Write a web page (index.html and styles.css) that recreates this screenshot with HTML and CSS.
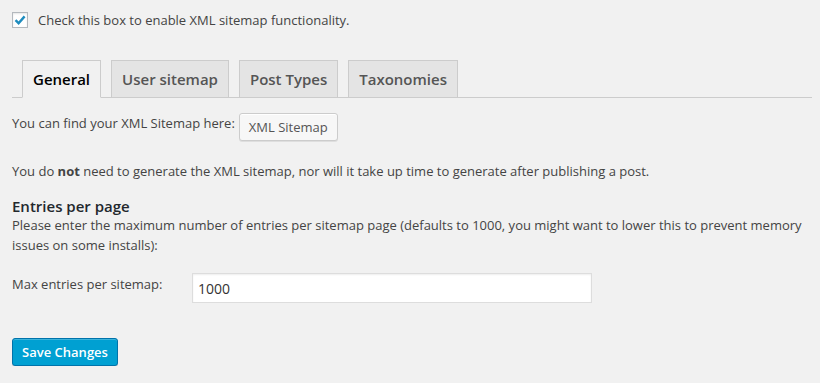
FILE: index.html
```html
<!DOCTYPE html>
<html lang="en">
<head>
    <meta charset="UTF-8">
    <title>XML Sitemaps</title>
    <link rel="stylesheet" href="styles.css">
</head>
<body>
    <div class="wrap">
        <label class="enable">
            <span class="checkbox">
                <svg width="16" height="16" viewBox="0 0 16 16"><path d="M3.5 8.2 L6.6 11.2 L12.6 4.4" fill="none" stroke="#1e8cbe" stroke-width="2.4"/></svg>
            </span>
            Check this box to enable XML sitemap functionality.
        </label>

        <div class="tabs">
            <span class="tab active">General</span>
            <span class="tab">User sitemap</span>
            <span class="tab">Post Types</span>
            <span class="tab">Taxonomies</span>
        </div>

        <div class="find">
            <span class="find-text">You can find your XML Sitemap here:</span>
            <button class="button">XML Sitemap</button>
        </div>

        <p class="note">You do <b>not</b> need to generate the XML sitemap, nor will it take up time to generate after publishing a post.</p>

        <h3 class="section-title">Entries per page</h3>
        <p class="desc">Please enter the maximum number of entries per sitemap page (defaults to 1000, you might want to lower this to prevent memory issues on some installs):</p>

        <div class="field">
            <label class="field-label">Max entries per sitemap:</label>
            <input class="field-input" type="text" value="1000">
        </div>

        <button class="button button-primary">Save Changes</button>
    </div>
</body>
</html>
```

FILE: styles.css
```css
body {
    margin: 0;
    background: #f1f1f1;
    color: #444;
    font-family: "Open Sans", sans-serif;
    font-size: 13px;
    line-height: 19px;
}
.wrap {
    padding: 12px 8px 0 12px;
}
.enable {
    display: flex;
    align-items: center;
    gap: 10px;
    height: 16px;
}
.checkbox {
    width: 14px;
    height: 14px;
    border: 1px solid #b4b9be;
    background: #fff;
    box-shadow: inset 0 1px 2px rgba(0, 0, 0, 0.1);
    position: relative;
}
.checkbox svg {
    position: absolute;
    top: -1px;
    left: -1px;
}
.tabs {
    display: flex;
    gap: 10px;
    margin-top: 32px;
    padding-left: 10px;
    border-bottom: 1px solid #ccc;
}
.tab {
    border: 1px solid #ccc;
    border-bottom: none;
    background: #e4e4e4;
    color: #555;
    font-size: 15px;
    font-weight: 600;
    line-height: 24px;
    padding: 6px 10px;
}
.tab.active {
    background: #f1f1f1;
    color: #000;
    border-bottom: 1px solid #f1f1f1;
    margin-bottom: -1px;
}
.find {
    display: flex;
    align-items: flex-start;
    gap: 4px;
    margin-top: 15px;
}
.find-text {
    padding-top: 1px;
}
.button {
    font-family: "Open Sans", sans-serif;
    font-size: 13px;
    line-height: 26px;
    height: 28px;
    padding: 0 9px 1px;
    border: 1px solid #ccc;
    border-radius: 3px;
    background: #f7f7f7;
    color: #555;
    box-shadow: inset 0 1px 0 #fff, 0 1px 0 rgba(0, 0, 0, 0.08);
}
.note {
    margin: 21px 0 0;
}
.section-title {
    margin: 16px 0 0;
    font-size: 15px;
    font-weight: 600;
    line-height: 19px;
    color: #23282d;
}
.desc {
    margin: 0;
    line-height: 19.5px;
}
.field {
    display: flex;
    align-items: flex-start;
    margin-top: 18px;
}
.field-label {
    width: 180px;
    padding-top: 2px;
}
.field-input {
    width: 400px;
    height: 30px;
    box-sizing: border-box;
    border: 1px solid #ddd;
    box-shadow: inset 0 1px 2px rgba(0, 0, 0, 0.07);
    background: #fff;
    color: #333;
    font-family: "Open Sans", sans-serif;
    font-size: 14px;
    padding: 3px 5px;
    margin: 0;
}
.button-primary {
    display: block;
    margin-top: 35px;
    width: 106px;
    padding: 0;
    background: #00a0d2;
    border-color: #0073aa;
    color: #fff;
    font-weight: 600;
    box-shadow: inset 0 1px 0 rgba(120, 200, 230, 0.5), 0 1px 0 rgba(0, 0, 0, 0.15);
}
```
